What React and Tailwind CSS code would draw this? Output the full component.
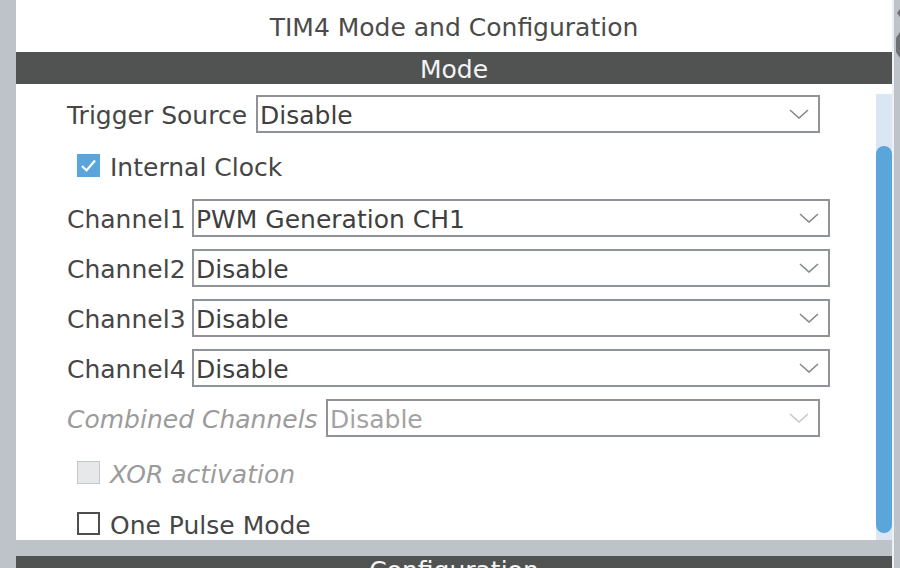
const font = { fontFamily: '"DejaVu Sans", "Liberation Sans", sans-serif' }

function Chevron({ disabled }) {
  return (
    <svg width="20" height="10" viewBox="0 0 20 10" className="flex-shrink-0">
      <path d="M1 1 L10 9 L19 1" fill="none" stroke={disabled ? "#c9c9c9" : "#85888c"} strokeWidth="1.6" />
    </svg>
  )
}

function Select({ value, w, disabled }) {
  return (
    <div className={"h-[38px] border-2 border-[#8f9297] flex items-center justify-between pl-[2px] pr-[9px] bg-white " + w}>
      <span className={"pt-[3px] " + (disabled ? "text-[#a3a3a3]" : "text-[#3f3f3f]")}>{value}</span>
      <Chevron disabled={disabled} />
    </div>
  )
}

function Row({ label, lw, value, w, disabled, className = "" }) {
  return (
    <div className={"flex items-center h-[38px] " + className}>
      <span className={"flex-shrink-0 whitespace-nowrap pt-[3px] " + lw + (disabled ? " italic text-[#9b9b9b]" : " text-[#464646]")}>{label}</span>
      <Select value={value} w={w} disabled={disabled} />
    </div>
  )
}

function Check({ label, checked, disabled, className = "" }) {
  return (
    <div className={"flex items-center h-[23px] pl-[10px] " + className}>
      {checked ? (
        <div className="w-[23px] h-[23px] bg-[#5aa5dc] flex items-center justify-center">
          <svg width="17" height="15" viewBox="0 0 17 15">
            <path d="M2 8 L6.5 12.5 L15 2.5" fill="none" stroke="white" strokeWidth="2.2" />
          </svg>
        </div>
      ) : disabled ? (
        <div className="w-[23px] h-[23px] bg-[#e6e8ea] border border-[#c4c7ca]" />
      ) : (
        <div className="w-[23px] h-[23px] bg-white border-2 border-[#4e4e4e]" />
      )}
      <span className={"ml-[10px] pt-[3px] whitespace-nowrap " + (disabled ? "italic text-[#9b9b9b]" : "text-[#464646]")}>{label}</span>
    </div>
  )
}

export default function App() {
  return (
    <div className="w-[900px] h-[568px] overflow-hidden flex bg-[#bdc3c9] text-[25px] leading-none" style={font}>
      <div className="w-4 flex-shrink-0" />
      <div className="w-[876px] flex-shrink-0 flex flex-col">
        <div className="h-[52px] bg-white flex items-center justify-center pt-[3px] text-[#4b4b4b]">TIM4 Mode and Configuration</div>
        <div className="h-[32px] bg-[#515352] flex items-center justify-center pt-[3px] text-[#f4f4f4]">Mode</div>
        <div className="h-[456px] bg-white flex">
          <div className="flex-1 flex flex-col pt-[11px] pl-[51px]">
            <Row label="Trigger Source" lw="w-[189px]" value="Disable" w="w-[564px]" />
            <Check label="Internal Clock" checked className="mt-[21px]" />
            <Row label="Channel1" lw="w-[125px]" value="PWM Generation CH1" w="w-[638px]" className="mt-[22px]" />
            <Row label="Channel2" lw="w-[125px]" value="Disable" w="w-[638px]" className="mt-[12px]" />
            <Row label="Channel3" lw="w-[125px]" value="Disable" w="w-[638px]" className="mt-[12px]" />
            <Row label="Channel4" lw="w-[125px]" value="Disable" w="w-[638px]" className="mt-[12px]" />
            <Row label="Combined Channels" lw="w-[259px]" value="Disable" w="w-[494px]" disabled className="mt-[12px]" />
            <Check label="XOR activation" disabled className="mt-[24px]" />
            <Check label="One Pulse Mode" className="mt-[28px]" />
          </div>
          <div className="w-4 flex flex-col pt-[10px]">
            <div className="flex-1 bg-[#dbe6f4] flex flex-col">
              <div className="mt-[52px] h-[387px] rounded-full bg-[#5aa5d9]" />
            </div>
          </div>
        </div>
        <div className="h-4 bg-[#bdc3c9]" />
        <div className="h-[12px] bg-[#515352] overflow-hidden">
          <div className="h-[32px] -mt-[3px] pt-[3px] flex items-center justify-center text-[#f4f4f4]">Configuration</div>
        </div>
      </div>
      <div className="w-[2px] flex-shrink-0 bg-[#eef0f2]" />
      <div className="flex-1">
        <svg width="6" height="60" viewBox="0 0 6 60">
          <path d="M6 9 L3 13 L6 17 Z" fill="#6d7175" />
          <path d="M6 32 L2 38 L2 52 L6 58 Z" fill="#6d7175" />
        </svg>
      </div>
    </div>
  )
}
